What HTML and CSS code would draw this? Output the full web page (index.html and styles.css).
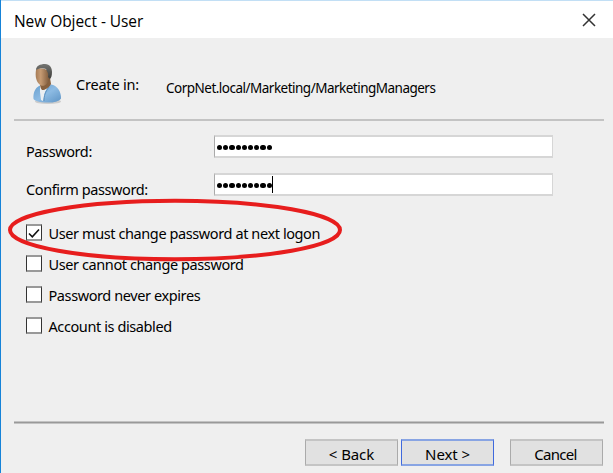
FILE: index.html
```html
<!DOCTYPE html>
<html lang="en">
<head>
<meta charset="utf-8">
<title>New Object - User</title>
<link rel="stylesheet" href="styles.css">
</head>
<body>
<main class="dialog">
  <header class="titlebar">
    <h1 class="title">New Object - User</h1>
    <svg class="close" width="14" height="14" viewBox="0 0 14 14"><path d="M1 1L13 13M13 1L1 13"/></svg>
  </header>
  <section class="location">
    <svg class="avatar" width="30" height="42" viewBox="0 0 30 42">
      <defs>
        <linearGradient id="shirt" x1="0" y1="0" x2="1" y2="1"><stop offset="0" stop-color="#689fce"/><stop offset=".5" stop-color="#8dbbe3"/><stop offset="1" stop-color="#5e94c5"/></linearGradient>
        <linearGradient id="skin" x1="0" y1="0" x2="1" y2="0"><stop offset="0" stop-color="#a67b55"/><stop offset=".35" stop-color="#c69b73"/><stop offset="1" stop-color="#765335"/></linearGradient>
        <linearGradient id="hair" x1="0" y1="0" x2="0" y2="1"><stop offset="0" stop-color="#747572"/><stop offset="1" stop-color="#3e3e3b"/></linearGradient>
      </defs>
      <ellipse cx="16" cy="37.500" rx="13" ry="2.500" fill="#cccccc"/>
      <path d="M1.500 35C1 29 3 24 7 22L11 20.500L19 20.500C25 21 29.500 28 29 34.500C27 38 19 39 15 38.500C8 38.500 3 37 1.500 35Z" fill="url(#shirt)"/>
      <path d="M8 22L12 20.500L16 23L13 28L11 37L9 36L8 28Z" fill="#eceff2"/>
      <path d="M12 37C12 32 13 28 17 23" fill="none" stroke="#5d91bf"/>
      <path d="M8 17L18 14L19 20C17 24 12 26.500 10 26C8 24 8 20 8 17Z" fill="#86603e"/>
      <path d="M4 6C5 3 13 4 17 7L18 14C16 19 13 23 9 21.500C4 19 3 12 4 6Z" fill="url(#skin)"/>
      <path d="M4 6C4 2 8 0 13 0C18 0 20 4 20 8C20 12 19 14 18 15L16 13C17 9 15 8 14 5C11 3.500 7 4 4 6Z" fill="url(#hair)"/>
    </svg>
    <span class="label create">Create in:</span>
    <span class="path">CorpNet.local/Marketing/MarketingManagers</span>
  </section>
  <form class="fields">
    <div class="field">
      <span class="label">Password:</span>
      <div class="input"><i class="dot"></i><i class="dot"></i><i class="dot"></i><i class="dot"></i><i class="dot"></i><i class="dot"></i><i class="dot"></i><i class="dot"></i><i class="dot"></i></div>
    </div>
    <div class="field">
      <span class="label">Confirm password:</span>
      <div class="input"><i class="dot"></i><i class="dot"></i><i class="dot"></i><i class="dot"></i><i class="dot"></i><i class="dot"></i><i class="dot"></i><i class="dot"></i><i class="dot"></i><i class="caret"></i></div>
    </div>
  </form>
  <section class="options">
    <div class="option"><span class="box"><svg width="14" height="14" viewBox="0 0 14 14"><path d="M2 7.500L5.300 10.800L12 3.500"/></svg></span><span>User must change password at next logon</span></div>
    <div class="option"><span class="box"></span><span>User cannot change password</span></div>
    <div class="option"><span class="box"></span><span>Password never expires</span></div>
    <div class="option"><span class="box"></span><span>Account is disabled</span></div>
    <svg class="highlight" width="336" height="66" viewBox="0 0 336 66"><ellipse cx="167" cy="32" rx="165" ry="29.3"/></svg>
  </section>
  <footer class="actions">
    <div class="button">&lt; Back</div>
    <div class="button primary">Next &gt;</div>
    <div class="button cancel">Cancel</div>
  </footer>
</main>
</body>
</html>
```
FILE: styles.css
```css
* { box-sizing: border-box; }
body { margin: 0; overflow: hidden; }
.dialog {
  width: 613px;
  height: 473px;
  display: flex;
  flex-direction: column;
  border-left: 1px solid #1683d8;
  background: #efefef;
  color: #000;
  font: 14.5px/20px "Noto Sans", sans-serif;
  letter-spacing: -0.4px;
  white-space: nowrap;
}
.titlebar {
  height: 38px;
  display: flex;
  justify-content: space-between;
  align-items: center;
  padding: 0 17px 0 13px;
  border-top: 1px solid #c2dff5;
  background: #fff;
}
.title { margin: 2px 0 0; font: 15.5px/20px "Open Sans", sans-serif; letter-spacing: -0.06px; }
.close { fill: none; stroke: #333; stroke-width: 1.5; }
.location {
  height: 83px;
  display: flex;
  align-items: flex-start;
  margin: 0 9px 0 13px;
  padding: 26px 0 0 18px;
  border-bottom: 2px solid #c3c3c3;
}
.create { width: 90px; margin: 10px 0 0 14px; letter-spacing: -0.2px; }
.path { margin-top: 14px; font-size: 13.5px; letter-spacing: -0.51px; }
.fields { padding: 14px 0 0 25px; }
.field { display: grid; grid-template-columns: 188px 339px; height: 38px; }
.field .label { margin-top: 6px; }
.input {
  height: 23px;
  display: flex;
  align-items: center;
  padding: 2px 0 0 2px;
  border: 2px solid #d6d6d6;
  border-width: 2px 1px 2px;
  border-left-color: #aaa;
  background: #fff;
}
.dot { width: 5.200px; height: 5.200px; margin-right: 1px; border-radius: 50%; background: #000; }
.caret { width: 1px; height: 17px; margin: -2px 0 0 -1px; background: #000; }
.options { position: relative; height: 210px; padding: 6px 0 0 25px; }
.option { height: 31px; display: flex; align-items: center; gap: 6.500px; }
.box {
  width: 16px;
  height: 17px;
  border: 1px solid #333;
  border-top: 2px solid #999;
  border-bottom: 2px solid #999;
  background: #fff;
}
.box svg { display: block; fill: none; stroke: #111; stroke-width: 1.6; }
.highlight { position: absolute; left: 7px; top: -13px; fill: none; stroke: #e71d1d; stroke-width: 4; }
.actions {
  height: 52px;
  display: flex;
  gap: 3px;
  margin: 0 9px 0 13px;
  padding: 18px 1px 0 291px;
  background: linear-gradient(#c3c3c3 1px, #999 1px 2px, #c3c3c3 2px 3px, transparent 3px);
}
.button {
  width: 93px;
  height: 27px;
  padding-top: 3px;
  border: 1px solid #aaa;
  border-top: 2px solid #c4c4c4;
  border-bottom: 2px solid #c4c4c4;
  background: #e1e1e1;
  font-size: 15px;
  letter-spacing: -0.1px;
  text-align: center;
}
.primary { border-color: #88a4e3 #3f69dd; }
.cancel { margin-left: 13px; padding-right: 2px; letter-spacing: -0.7px; }
```
